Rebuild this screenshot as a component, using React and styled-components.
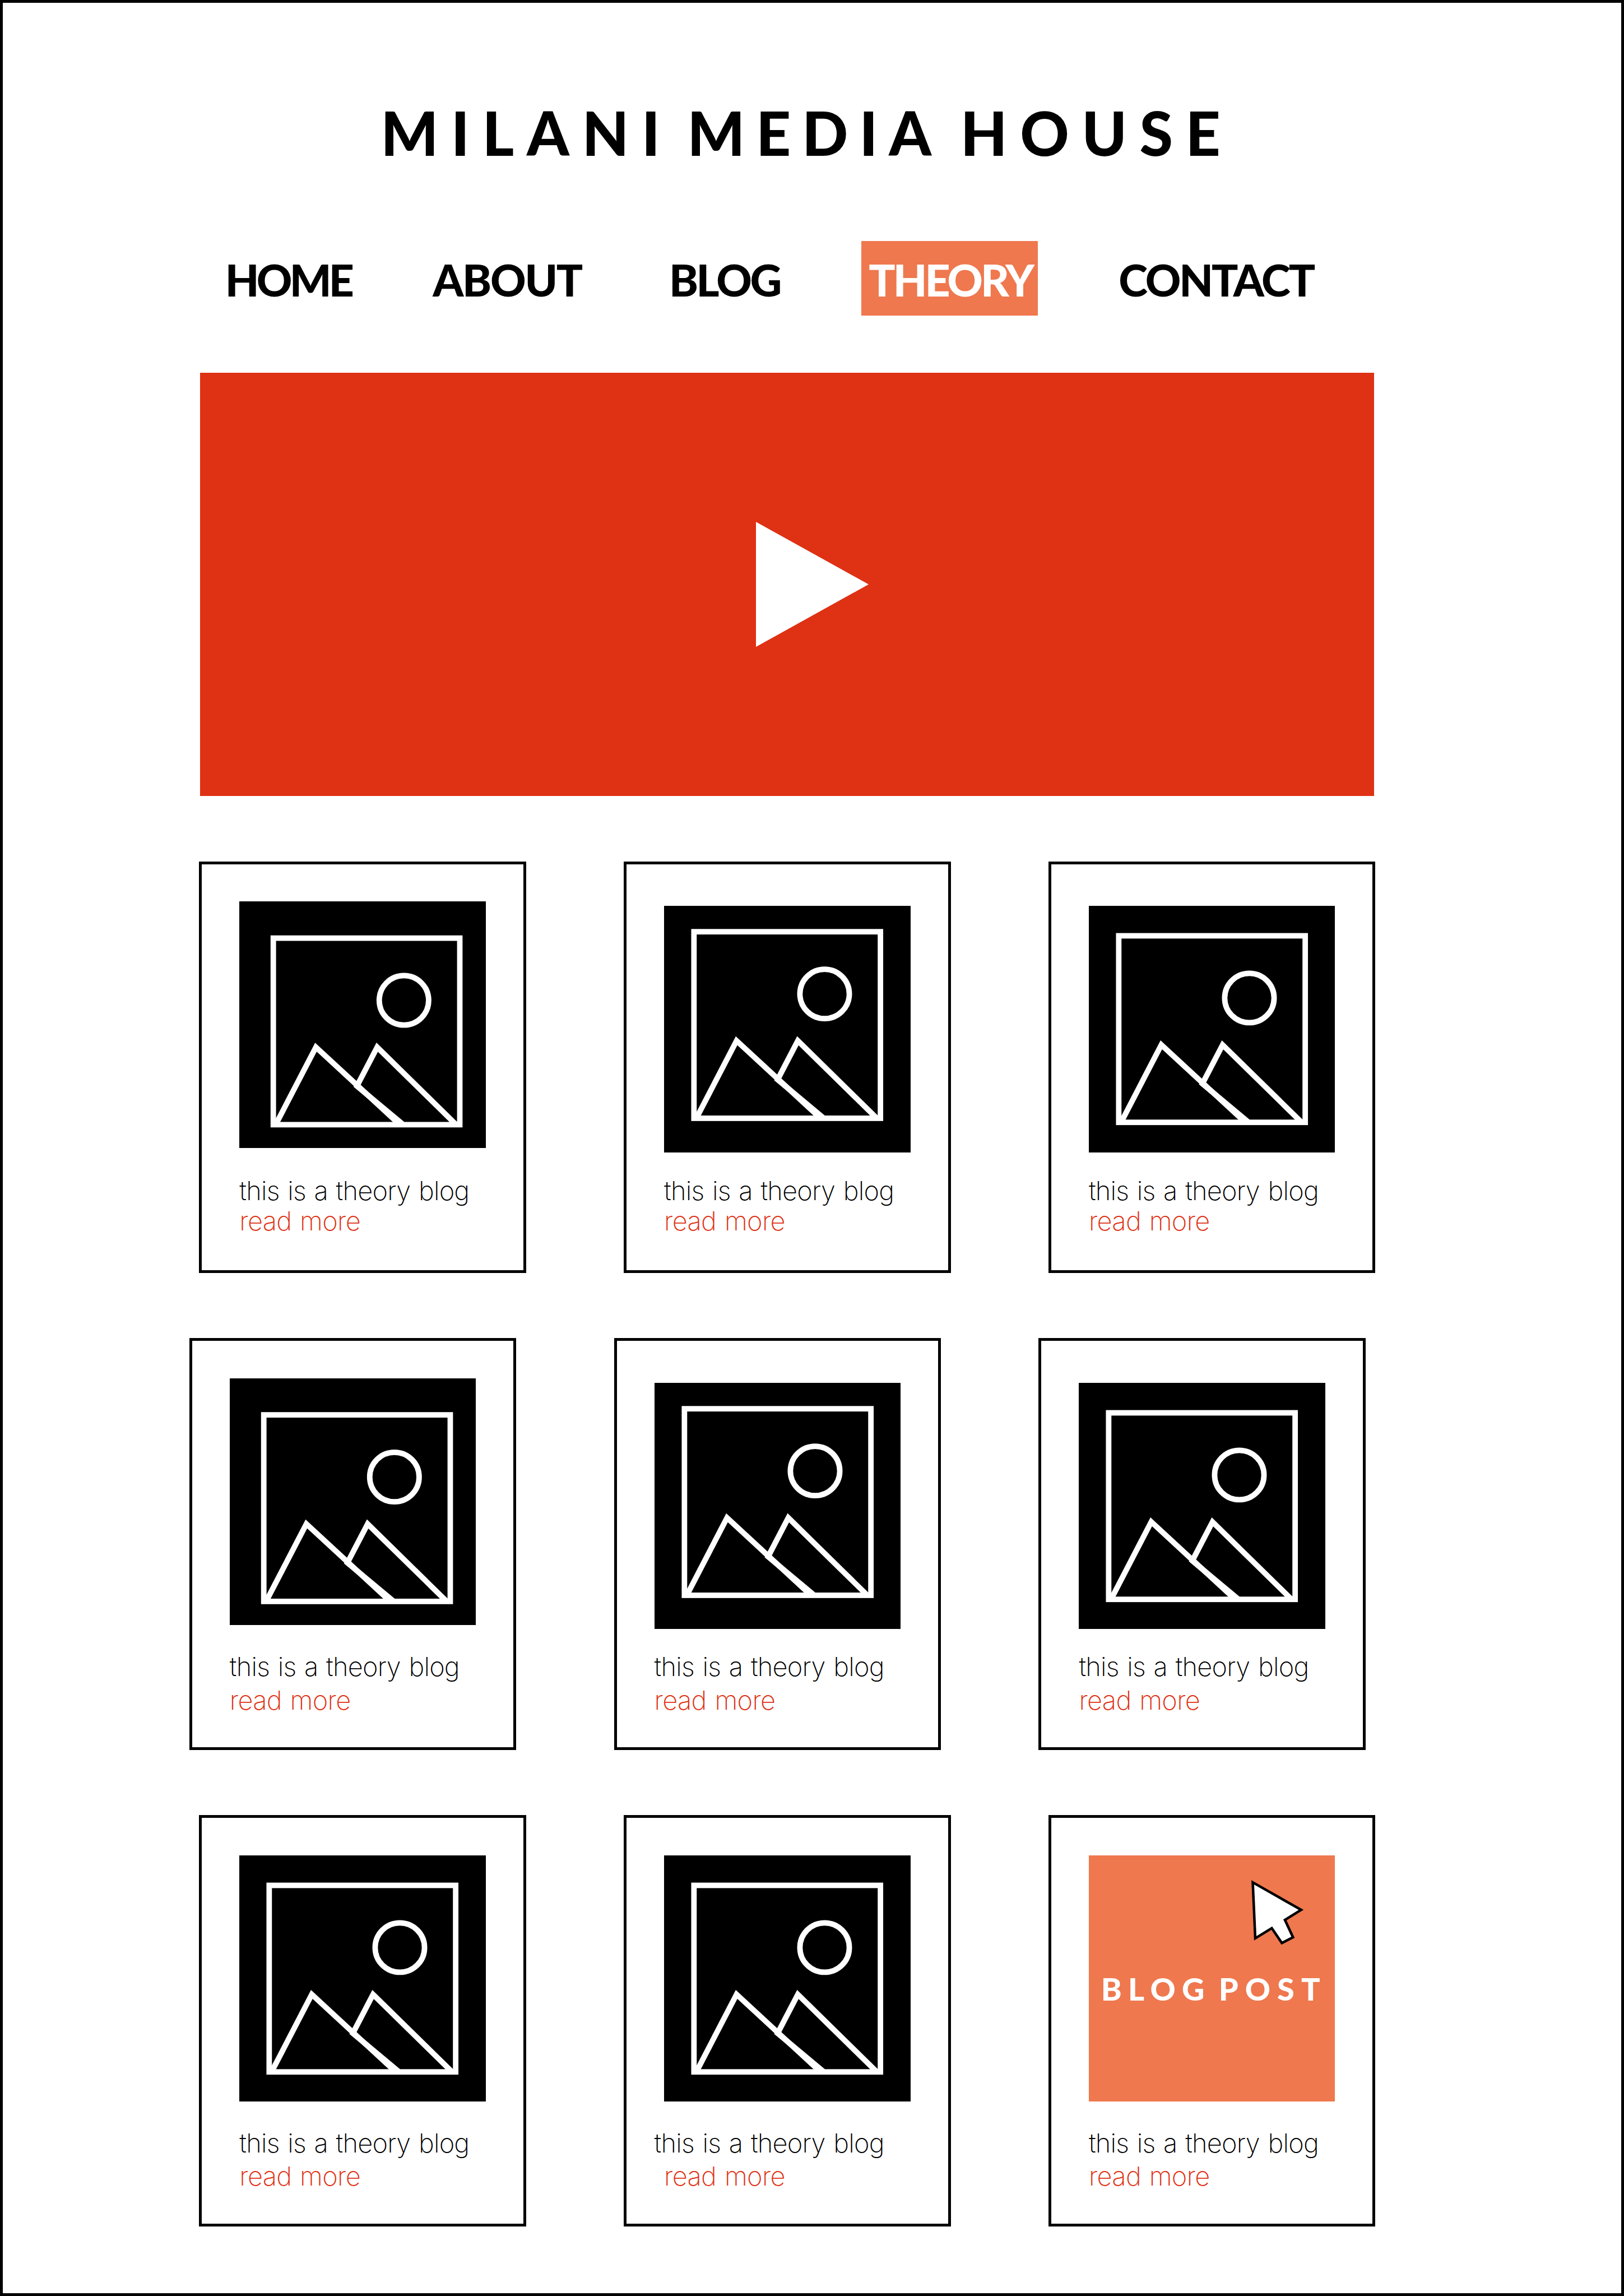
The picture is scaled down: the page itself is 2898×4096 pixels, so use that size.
import React from "react";
import styled, { createGlobalStyle } from "styled-components";

const ink = "#000000";
const red = "#df3113";
const orange = "#ef784e";

const GlobalStyle = createGlobalStyle`
  *, *::before, *::after { box-sizing: border-box; }
  body { margin: 0; background: #ffffff; }
`;

const Page = styled.main`
  width: 2898px;
  height: 4096px;
  overflow: hidden;
  border: 5px solid ${ink};
  background: #ffffff;
  color: ${ink};
  font-family: Lato, "Liberation Sans", sans-serif;
`;

const Title = styled.h1`
  display: flex;
  margin: 0;
  padding: 171.3px 0 0 674.4px;
  font-size: 108px;
  font-weight: 900;
  line-height: 120px;
`;

const Word = styled.span`
  letter-spacing: ${(p) => p.$tracking}px;
  margin-left: ${(p) => p.$gap || 0}px;
  white-space: nowrap;
`;

const Nav = styled.nav`
  display: flex;
  height: 133px;
  margin-top: 134.1px;
  padding-left: 396.8px;
`;

const NavItem = styled.a`
  flex: none;
  width: ${(p) => p.$width}px;
  height: 133px;
  margin-left: ${(p) => p.$gap}px;
  padding-left: ${(p) => (p.$active ? 13.7 : 0)}px;
  background: ${(p) => (p.$active ? orange : "transparent")};
  color: ${(p) => (p.$active ? "#ffffff" : ink)};
  font-size: 78.6px;
  font-weight: 900;
  line-height: 138px;
  letter-spacing: ${(p) => p.$tracking}px;
  white-space: nowrap;
`;

const Hero = styled.section`
  display: flex;
  align-items: center;
  width: 2095px;
  height: 755px;
  margin: 101.7px 0 0 352.2px;
  padding-left: 991.6px;
  background: ${red};
`;

const PlayIcon = styled.svg`
  display: block;
  width: 201px;
  height: 223px;
`;

const Grid = styled.section`
  display: flex;
  flex-direction: column;
  gap: 115.9px;
  padding-top: 116.5px;
`;

const Row = styled.div`
  display: flex;
  gap: 174.3px;
  margin-left: ${(p) => p.$inset}px;
`;

const Card = styled.article`
  flex: none;
  width: 583.5px;
  height: 734.7px;
  border: 5px solid ${ink};
  padding-left: 67px;
`;

const Slot = styled.div`
  height: ${(p) => p.$height}px;
  padding-top: ${(p) => p.$top}px;
`;

const Media = styled.div`
  position: relative;
  width: 439.5px;
  height: 439.5px;
  background: ${(p) => (p.$hovered ? orange : ink)};
`;

const Scene = styled.svg`
  display: block;
  width: 100%;
  height: 100%;
`;

const PostLabel = styled.div`
  display: flex;
  padding: 208.4px 0 0 21.8px;
  color: #ffffff;
  font-size: 55.8px;
  font-weight: 900;
  line-height: 60px;
`;

const Cursor = styled.svg`
  position: absolute;
  top: 0;
  left: 0;
  width: 100%;
  height: 100%;
`;

const Caption = styled.p`
  margin: 0 0 0 ${(p) => p.$shift || 0}px;
  font-family: Inter, "Liberation Sans", sans-serif;
  font-size: 47px;
  font-weight: 200;
  line-height: 53px;
  letter-spacing: -0.8px;
  word-spacing: 2.2px;
  white-space: nowrap;
`;

const ReadMore = styled.a`
  display: block;
  margin-top: ${(p) => p.$gap}px;
  color: ${red};
  font-family: Inter, "Liberation Sans", sans-serif;
  font-size: 47px;
  font-weight: 200;
  line-height: 54px;
  letter-spacing: -0.7px;
  word-spacing: 2.2px;
  white-space: nowrap;
`;

const titleWords = [
  { text: "MILANI", tracking: 22.9 },
  { text: "MEDIA", tracking: 20, gap: 25.8 },
  { text: "HOUSE", tracking: 22.6, gap: 32.1 },
];

const links = [
  { text: "HOME", width: 224.5, gap: 0, tracking: -4.8 },
  { text: "ABOUT", width: 265.2, gap: 145.9, tracking: -2.25 },
  { text: "BLOG", width: 197.5, gap: 156.5, tracking: -3.5 },
  { text: "THEORY", width: 315, gap: 145.2, tracking: -4.05, active: true },
  { text: "CONTACT", width: 350, gap: 144.7, tracking: -3.1 },
];

const rows = [
  {
    inset: 350.3, slot: 555.7, leading: 1.1,
    cards: [
      { top: 66.9, x: 63.8, y: 69.4 },
      { top: 74.6, x: 55.4, y: 47.2 },
      { top: 74.6, x: 55.4, y: 55.5 },
    ],
  },
  {
    inset: 332.8, slot: 553.8, leading: 7.2,
    cards: [
      { top: 67, x: 63.8, y: 68.8 },
      { top: 74.6, x: 55.4, y: 47.2 },
      { top: 74.6, x: 55.4, y: 55.5 },
    ],
  },
  {
    inset: 350.3, slot: 553.3, leading: 6.2,
    cards: [
      { top: 66.8, x: 55.4, y: 55.5 },
      { top: 66.8, x: 55.4, y: 55.5, shift: -17.5 },
      { top: 66.8, hovered: true },
    ],
  },
];

function Placeholder({ x, y }) {
  return (
    <Scene viewBox="0 0 502.4 502.4">
      <g transform={`translate(${x} ${y})`} fill="none" stroke="#fff" strokeWidth="11.2" strokeMiterlimit="10">
        <rect x="5.6" y="5.6" width="380.4" height="380.4" />
        <circle cx="272.1" cy="132.4" r="50.4" />
        <path d="M10.4 386 L92.5 228 L263.6 386" />
        <path d="M270.6 386 L176.2 307.3 L217.5 228 L378.6 386" />
      </g>
    </Scene>
  );
}

function HoveredPost() {
  return (
    <>
      <PostLabel>
        <Word $tracking={11.4}>BLOG</Word>
        <Word $tracking={12.1} $gap={13.8}>POST</Word>
      </PostLabel>
      <Cursor viewBox="0 0 502.4 502.4">
        <path
          d="M334.4 55 L433 111 L400 131.5 L416.5 167 L393.8 178.7 L373.2 148.4 L339.5 169 Z"
          fill="#fff"
          stroke="#000"
          strokeWidth="5.2"
          strokeMiterlimit="10"
        />
      </Cursor>
    </>
  );
}

export default function App() {
  return (
    <Page>
      <GlobalStyle />
      <Title>
        {titleWords.map((w) => (
          <Word key={w.text} $tracking={w.tracking} $gap={w.gap}>{w.text}</Word>
        ))}
      </Title>
      <Nav>
        {links.map((l) => (
          <NavItem key={l.text} $width={l.width} $gap={l.gap} $tracking={l.tracking} $active={l.active}>
            {l.text}
          </NavItem>
        ))}
      </Nav>
      <Hero>
        <PlayIcon viewBox="0 0 201 223" preserveAspectRatio="none">
          <polygon points="0,0 201,111.5 0,223" fill="#fff" />
        </PlayIcon>
      </Hero>
      <Grid>
        {rows.map((row, r) => (
          <Row key={r} $inset={row.inset}>
            {row.cards.map((c, i) => (
              <Card key={i}>
                <Slot $height={row.slot} $top={c.top}>
                  <Media $hovered={c.hovered}>
                    {c.hovered ? <HoveredPost /> : <Placeholder x={c.x} y={c.y} />}
                  </Media>
                </Slot>
                <Caption $shift={c.shift}>this is a theory blog</Caption>
                <ReadMore $gap={row.leading}>read more</ReadMore>
              </Card>
            ))}
          </Row>
        ))}
      </Grid>
    </Page>
  );
}
